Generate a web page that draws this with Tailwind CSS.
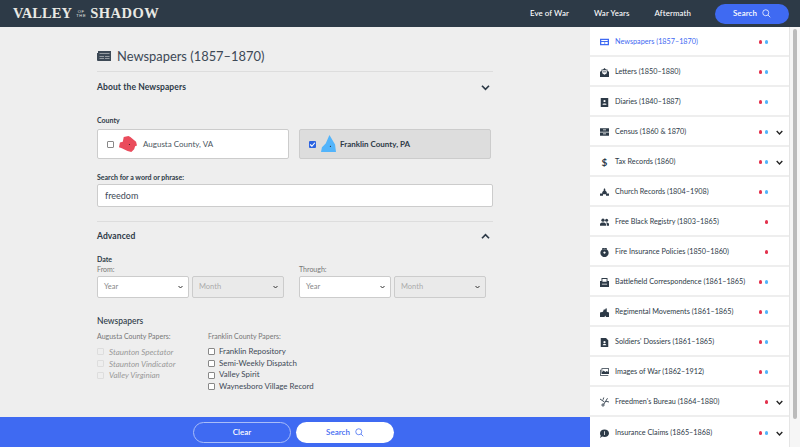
<!DOCTYPE html>
<html lang="en">
<head>
<meta charset="utf-8">
<script src="https://cdn.jsdelivr.net/npm/@tailwindcss/browser@4"></script>
<title>Valley of the Shadow</title>
</head>
<body class="h-[447px] w-[800px] overflow-hidden bg-[#eeeeee] font-['Lato',sans-serif] text-[#2d3a47]">
<header class="flex h-[27px] items-center justify-between bg-[#2d3a47] pl-[13px] pr-[11px] text-white">
  <div class="flex items-center font-['Liberation_Serif',serif] text-[14.5px] font-bold tracking-[0.1px] text-[#e9e9e4]">
    <span>VALLEY</span>
    <span class="mx-[4px] flex flex-col items-center font-['Liberation_Sans',sans-serif] text-[4px] font-normal leading-[4px] tracking-[0.7px]"><span>OF</span><span>THE</span></span>
    <span class="tracking-[0.5px]">SHADOW</span>
  </div>
  <nav class="flex items-center text-[7.9px] font-medium tracking-[0.1px]">
    <a class="mr-[25px]">Eve of War</a>
    <a class="mr-[25px]">War Years</a>
    <a class="mr-[24px]">Aftermath</a>
    <button class="flex h-[20px] w-[74px] items-center justify-center gap-[5px] rounded-full bg-[#3f6af2] font-semibold">Search
      <svg class="h-[9px] w-[9px]" viewBox="0 0 24 24" fill="none" stroke="currentColor" stroke-width="2"><circle cx="10" cy="10" r="8"/><path d="M16 16l6 6"/></svg>
    </button>
  </nav>
</header>
<div class="flex h-[420px]">
  <main class="flex h-full w-[590px] flex-col">
    <div class="h-[390px] px-[97px]">
      <div class="flex h-[45px] items-end gap-[6px] border-b border-[#dddddd] pb-[6px]">
        <svg class="mb-[4px] h-[10px] w-[14px] text-[#3d4956]" viewBox="0 0 14 10" fill="currentColor"><path fill-rule="evenodd" d="M0 2h1V0h13v10H1a1 1 0 0 1-1-1zM2.500 2.400v.6h10v-.6zM2.500 5v.6h4.600V5zM8 5v.6h4.500V5zM2.500 7.200v.6h4.600v-.6zM8 7.200v.6h4.500v-.6z"/></svg>
        <h1 class="text-[12.9px] font-normal leading-[18px] text-[#3d4956]">Newspapers (1857–1870)</h1>
      </div>
      <div class="flex h-[30px] items-center justify-between">
        <h2 class="text-[8.5px] font-bold tracking-[0.1px]">About the Newspapers</h2>
        <svg class="mr-[3px] h-[7px] w-[9px]" viewBox="0 0 10 8" fill="none" stroke="currentColor" stroke-width="2"><path d="M1 2l4 4 4-4"/></svg>
      </div>
      <p class="mt-[12px] mb-[3px] h-[12px] text-[7px] font-bold leading-[12px]">County</p>
      <div class="flex gap-[10px]">
        <label class="flex h-[30px] w-[192px] items-center rounded-[2px] border border-[#cccccc] bg-white pl-[9px] text-[8px] text-[#4a5560]">
          <span class="h-[7px] w-[7px] rounded-[1px] border border-[#888888] bg-white"></span>
          <svg class="ml-[5px] h-[18px] w-[18px]" viewBox="0 0 19 19"><path fill="#ea4c5c" d="M5 2l5-1 2 1 6 5 1 4-2 1-1 3-3 3-4-1-6-3-3-1 1-5 3-1z"/><circle cx="11" cy="10" r=".6" fill="#222"/></svg>
          <span class="ml-[6px]">Augusta County, VA</span>
        </label>
        <label class="flex h-[30px] w-[192px] items-center rounded-[2px] border border-[#cccccc] bg-[#dddddd] pl-[9px] text-[8px] font-bold">
          <span class="flex h-[7px] w-[7px] items-center justify-center rounded-[1px] bg-[#2b63e0]"><svg class="h-[7px] w-[7px]" viewBox="0 0 6 6" fill="none" stroke="white" stroke-width="1"><path d="M1 3l1.500 1.500L5 1.500"/></svg></span>
          <svg class="ml-[5px] h-[18px] w-[15px]" viewBox="0 0 16 19"><path fill="#52b4fb" d="M9 0l6 10 1 8-16 0 1-5 4-4z"/><circle cx="10" cy="12" r=".6" fill="#222"/></svg>
          <span class="ml-[4px]">Franklin County, PA</span>
        </label>
      </div>
      <label class="mt-[12px] block h-[12px] text-[7px] font-bold leading-[12px]">Search for a word or phrase:</label>
      <div class="mt-[1px] flex h-[23px] items-center rounded-[2px] border border-[#cccccc] bg-white px-[7px] text-[9px] text-[#3d4956]">freedom</div>
      <div class="mt-[14px] flex h-[30px] items-center justify-between border-t border-[#dddddd]">
        <h2 class="text-[8.5px] font-bold tracking-[0.1px]">Advanced</h2>
        <svg class="mr-[3px] h-[7px] w-[9px]" viewBox="0 0 10 8" fill="none" stroke="currentColor" stroke-width="2"><path d="M1 6l4-4 4 4"/></svg>
      </div>
      <p class="mt-[1px] h-[13px] text-[7px] font-bold leading-[14px]">Date</p>
      <div class="flex gap-[10px]">
        <div class="w-[192px]">
          <p class="h-[11px] text-[7px] leading-[8px] text-[#777777]">From:</p>
          <div class="flex gap-[3px]">
            <div class="flex h-[22px] w-[92px] items-center justify-between rounded-[2px] border border-[#cccccc] bg-white pl-[6px] pr-[5px] text-[7.5px] text-[#888888]">Year<svg class="h-[4px] w-[5px] text-[#333333]" viewBox="0 0 10 8" fill="none" stroke="currentColor" stroke-width="2"><path d="M1 2l4 4 4-4"/></svg></div>
            <div class="flex h-[22px] w-[92px] items-center justify-between rounded-[2px] border border-[#cccccc] bg-[#eaeaea] pl-[6px] pr-[5px] text-[7.5px] text-[#aaaaaa]">Month<svg class="h-[4px] w-[5px] text-[#333333]" viewBox="0 0 10 8" fill="none" stroke="currentColor" stroke-width="2"><path d="M1 2l4 4 4-4"/></svg></div>
          </div>
        </div>
        <div class="w-[192px]">
          <p class="h-[11px] text-[7px] leading-[8px] text-[#777777]">Through:</p>
          <div class="flex gap-[3px]">
            <div class="flex h-[22px] w-[92px] items-center justify-between rounded-[2px] border border-[#cccccc] bg-white pl-[6px] pr-[5px] text-[7.5px] text-[#888888]">Year<svg class="h-[4px] w-[5px] text-[#333333]" viewBox="0 0 10 8" fill="none" stroke="currentColor" stroke-width="2"><path d="M1 2l4 4 4-4"/></svg></div>
            <div class="flex h-[22px] w-[92px] items-center justify-between rounded-[2px] border border-[#cccccc] bg-[#eaeaea] pl-[6px] pr-[5px] text-[7.5px] text-[#aaaaaa]">Month<svg class="h-[4px] w-[5px] text-[#333333]" viewBox="0 0 10 8" fill="none" stroke="currentColor" stroke-width="2"><path d="M1 2l4 4 4-4"/></svg></div>
          </div>
        </div>
      </div>
      <h3 class="mt-[17px] h-[12px] text-[8.5px] font-medium leading-[12px]">Newspapers</h3>
      <div class="mt-[3px] flex">
        <div class="w-[111px]">
          <p class="mb-[4px] h-[12px] text-[7px] leading-[12px] text-[#777777]">Augusta County Papers:</p>
          <div class="flex h-[11.7px] items-center gap-[5px] text-[8px] italic text-[#999999]"><span class="h-[7px] w-[7px] rounded-[1px] border border-[#dddddd]"></span>Staunton Spectator</div>
          <div class="flex h-[11.7px] items-center gap-[5px] text-[8px] italic text-[#999999]"><span class="h-[7px] w-[7px] rounded-[1px] border border-[#dddddd]"></span>Staunton Vindicator</div>
          <div class="flex h-[11.7px] items-center gap-[5px] text-[8px] italic text-[#999999]"><span class="h-[7px] w-[7px] rounded-[1px] border border-[#dddddd]"></span>Valley Virginian</div>
        </div>
        <div>
          <p class="mb-[4px] h-[12px] text-[7px] leading-[12px] text-[#777777]">Franklin County Papers:</p>
          <div class="flex h-[11.7px] items-center gap-[4px] text-[7.9px] text-[#3d4956]"><span class="h-[7px] w-[7px] rounded-[1px] border border-[#888888] bg-white"></span>Franklin Repository</div>
          <div class="flex h-[11.7px] items-center gap-[4px] text-[7.9px] text-[#3d4956]"><span class="h-[7px] w-[7px] rounded-[1px] border border-[#888888] bg-white"></span>Semi-Weekly Dispatch</div>
          <div class="flex h-[11.7px] items-center gap-[4px] text-[7.9px] text-[#3d4956]"><span class="h-[7px] w-[7px] rounded-[1px] border border-[#888888] bg-white"></span>Valley Spirit</div>
          <div class="flex h-[11.7px] items-center gap-[4px] text-[7.9px] text-[#3d4956]"><span class="h-[7px] w-[7px] rounded-[1px] border border-[#888888] bg-white"></span>Waynesboro Village Record</div>
        </div>
      </div>
    </div>
    <div class="flex h-[30px] items-center justify-center gap-[5px] bg-[#3f6af2] pr-[3px] text-[8px] font-semibold">
      <button class="h-[21px] w-[98px] rounded-full border border-[#a9bdf8] text-white">Clear</button>
      <button class="flex h-[21px] w-[98px] items-center justify-center gap-[5px] rounded-full bg-white text-[#3f6af2]">Search
        <svg class="h-[9px] w-[9px]" viewBox="0 0 24 24" fill="none" stroke="currentColor" stroke-width="2"><circle cx="10" cy="10" r="8"/><path d="M16 16l6 6"/></svg>
      </button>
    </div>
  </main>
  <aside class="flex h-full w-[210px] bg-white">
    <ul class="w-[199px] text-[7.25px] text-[#2d3a47]">
      <li class="flex h-[30px] items-center border-b-2 border-[#eeeeee] pt-[2px] pl-[10px] text-[#3f6af2]">
        <svg class="h-[8px] w-[9px]" viewBox="0 0 14 12" fill="currentColor"><path fill-rule="evenodd" d="M0 1h14v10H0zM2 3v1.500h10V3zM2 6v3h5V6zM8 6v3h4V6z"/></svg>
        <span class="ml-[6px] flex-1">Newspapers (1857–1870)</span>
        <span class="mr-[2.500px] h-[3.500px] w-[3.500px] rounded-full bg-[#e3324d]"></span><span class="mr-[21px] h-[3.500px] w-[3.500px] rounded-full bg-[#52b4fb]"></span>
      </li>
      <li class="flex h-[30px] items-center border-b-2 border-[#eeeeee] pt-[2px] pl-[10px]">
        <svg class="h-[9px] w-[9px]" viewBox="0 0 12 12" fill="#2d3a47"><path fill-rule="evenodd" d="M0 5l2-1V2h2l2-2 2 2h2v2l2 1v7H0zM3 3v4l3 2 3-2V3zM4 4.500h4v1H4z"/></svg>
        <span class="ml-[6px] flex-1">Letters (1850–1880)</span>
        <span class="mr-[2.500px] h-[3.500px] w-[3.500px] rounded-full bg-[#e3324d]"></span><span class="mr-[21px] h-[3.500px] w-[3.500px] rounded-full bg-[#52b4fb]"></span>
      </li>
      <li class="flex h-[30px] items-center border-b-2 border-[#eeeeee] pt-[2px] pl-[10px]">
        <svg class="h-[9px] w-[9px]" viewBox="0 0 12 12" fill="#2d3a47"><path fill-rule="evenodd" d="M1 0h10v12H1zM6 2.500a1.500 1.500 0 1 0 .01 0zM3.500 8v1h5V8c0-1-5-1-5 0z"/></svg>
        <span class="ml-[6px] flex-1">Diaries (1840–1887)</span>
        <span class="mr-[2.500px] h-[3.500px] w-[3.500px] rounded-full bg-[#e3324d]"></span><span class="mr-[21px] h-[3.500px] w-[3.500px] rounded-full bg-[#52b4fb]"></span>
      </li>
      <li class="flex h-[30px] items-center border-b-2 border-[#eeeeee] pt-[2px] pl-[10px]">
        <svg class="h-[8px] w-[9px]" viewBox="0 0 12 10" fill="#2d3a47"><path fill-rule="evenodd" d="M0 0h12v4.500H0zM0 5.500h12V10H0zM4 1.500v1h4v-1zM4 7v1h4V7z"/></svg>
        <span class="ml-[6px] flex-1">Census (1860 &amp; 1870)</span>
        <span class="mr-[2.500px] h-[3.500px] w-[3.500px] rounded-full bg-[#e3324d]"></span><span class="mr-[8px] h-[3.500px] w-[3.500px] rounded-full bg-[#52b4fb]"></span>
        <svg class="mr-[6px] h-[7px] w-[7px] text-[#222222]" viewBox="0 0 10 8" fill="none" stroke="currentColor" stroke-width="2"><path d="M1 2l4 4 4-4"/></svg>
      </li>
      <li class="flex h-[30px] items-center border-b-2 border-[#eeeeee] pt-[2px] pl-[10px]">
        <span class="flex h-[9px] w-[9px] items-center justify-center text-[10px] font-bold text-[#2d3a47]">$</span>
        <span class="ml-[6px] flex-1">Tax Records (1860)</span>
        <span class="mr-[2.500px] h-[3.500px] w-[3.500px] rounded-full bg-[#e3324d]"></span><span class="mr-[8px] h-[3.500px] w-[3.500px] rounded-full bg-[#52b4fb]"></span>
        <svg class="mr-[6px] h-[7px] w-[7px] text-[#222222]" viewBox="0 0 10 8" fill="none" stroke="currentColor" stroke-width="2"><path d="M1 2l4 4 4-4"/></svg>
      </li>
      <li class="flex h-[30px] items-center border-b-2 border-[#eeeeee] pt-[2px] pl-[10px]">
        <svg class="h-[8px] w-[9px]" viewBox="0 0 12 10" fill="#2d3a47"><path d="M6 0l1 1v2l2 2v2h3v3H8V8H4v2H0V7h3V5l2-2V1z"/></svg>
        <span class="ml-[6px] flex-1">Church Records (1804–1908)</span>
        <span class="mr-[2.500px] h-[3.500px] w-[3.500px] rounded-full bg-[#e3324d]"></span><span class="mr-[21px] h-[3.500px] w-[3.500px] rounded-full bg-[#52b4fb]"></span>
      </li>
      <li class="flex h-[30px] items-center border-b-2 border-[#eeeeee] pt-[2px] pl-[10px]">
        <svg class="h-[8px] w-[9px]" viewBox="0 0 12 10" fill="#2d3a47"><circle cx="4" cy="2.500" r="2.200"/><circle cx="8.800" cy="2.500" r="2"/><path d="M0 10V8c0-3 8-3 8 0v2zM9 10V8c0-1-.5-1.700-1-2.300 2-.5 4 .5 4 2.300v2z"/></svg>
        <span class="ml-[6px] flex-1">Free Black Registry (1803–1865)</span>
        <span class="mr-[21px] h-[3.500px] w-[3.500px] rounded-full bg-[#e3324d]"></span>
      </li>
      <li class="flex h-[30px] items-center border-b-2 border-[#eeeeee] pt-[2px] pl-[10px]">
        <svg class="h-[9px] w-[9px]" viewBox="0 0 12 12" fill="#2d3a47"><path fill-rule="evenodd" d="M6 1a5.500 5.500 0 1 0 .01 0zM6 4.500a1.500 1.500 0 1 1-.01 0zM3 0h6v1.500H3z"/></svg>
        <span class="ml-[6px] flex-1">Fire Insurance Policies (1850–1860)</span>
        <span class="mr-[21px] h-[3.500px] w-[3.500px] rounded-full bg-[#e3324d]"></span>
      </li>
      <li class="flex h-[30px] items-center border-b-2 border-[#eeeeee] pt-[2px] pl-[10px]">
        <svg class="h-[9px] w-[9px]" viewBox="0 0 12 12" fill="#2d3a47"><path fill-rule="evenodd" d="M2 0h8v4h2v8H0V4h2zM3.200 1.200V5h5.600V1.200zM2.500 7.500v1h7v-1z"/></svg>
        <span class="ml-[6px] flex-1">Battlefield Correspondence (1861–1865)</span>
        <span class="mr-[2.500px] h-[3.500px] w-[3.500px] rounded-full bg-[#e3324d]"></span><span class="mr-[21px] h-[3.500px] w-[3.500px] rounded-full bg-[#52b4fb]"></span>
      </li>
      <li class="flex h-[30px] items-center border-b-2 border-[#eeeeee] pt-[2px] pl-[10px]">
        <svg class="h-[9px] w-[9px]" viewBox="0 0 12 12" fill="#2d3a47"><path d="M0 6l4-1 1-3 2 0 1-2 1 1v4l3 1v6H8l-1-2-1 2H0z"/></svg>
        <span class="ml-[6px] flex-1">Regimental Movements (1861–1865)</span>
        <span class="mr-[2.500px] h-[3.500px] w-[3.500px] rounded-full bg-[#e3324d]"></span><span class="mr-[21px] h-[3.500px] w-[3.500px] rounded-full bg-[#52b4fb]"></span>
      </li>
      <li class="flex h-[30px] items-center border-b-2 border-[#eeeeee] pt-[2px] pl-[10px]">
        <svg class="h-[9px] w-[9px]" viewBox="0 0 12 12" fill="#2d3a47"><path fill-rule="evenodd" d="M1 0h7l3 3v9H1zM6 4a1.500 1.500 0 1 0 .01 0zM3.500 9.500h5C8.500 7.500 3.500 7.500 3.500 9.500z"/></svg>
        <span class="ml-[6px] flex-1">Soldiers' Dossiers (1861–1865)</span>
        <span class="mr-[2.500px] h-[3.500px] w-[3.500px] rounded-full bg-[#e3324d]"></span><span class="mr-[21px] h-[3.500px] w-[3.500px] rounded-full bg-[#52b4fb]"></span>
      </li>
      <li class="flex h-[30px] items-center border-b-2 border-[#eeeeee] pt-[2px] pl-[10px]">
        <svg class="h-[8px] w-[9px]" viewBox="0 0 12 10" fill="#2d3a47"><path fill-rule="evenodd" d="M2 0h10v7.500H2zM3 1v4l2-2 2 2 2-1.500L11 5V1zM0 2h1v7h10v1H0z"/></svg>
        <span class="ml-[6px] flex-1">Images of War (1862–1912)</span>
        <span class="mr-[2.500px] h-[3.500px] w-[3.500px] rounded-full bg-[#e3324d]"></span><span class="mr-[21px] h-[3.500px] w-[3.500px] rounded-full bg-[#52b4fb]"></span>
      </li>
      <li class="flex h-[30px] items-center border-b-2 border-[#eeeeee] pt-[2px] pl-[10px]">
        <svg class="h-[10px] w-[9px]" viewBox="0 0 12 12" fill="none" stroke="#2d3a47" stroke-width="1.200"><circle cx="4" cy="10" r="1.500"/><path d="M5 9l5-8M0 2l6 4M4 3l1-3M8 5l4 1"/></svg>
        <span class="ml-[6px] flex-1">Freedmen's Bureau (1864–1880)</span>
        <span class="mr-[8px] h-[3.500px] w-[3.500px] rounded-full bg-[#e3324d]"></span>
        <svg class="mr-[6px] h-[7px] w-[7px] text-[#222222]" viewBox="0 0 10 8" fill="none" stroke="currentColor" stroke-width="2"><path d="M1 2l4 4 4-4"/></svg>
      </li>
      <li class="flex h-[30px] items-center pt-[2px] pl-[10px]">
        <svg class="h-[9px] w-[9px]" viewBox="0 0 12 12" fill="#2d3a47"><path fill-rule="evenodd" d="M6 .500c3.500 0 6 2.300 6 5s-2.500 5-6 5c-1 0-2-.2-3-.6L0 12l1-3C.300 8 0 6.800 0 5.500 0 2.800 2.500.500 6 .500zM5.500 3v5h1V3z"/></svg>
        <span class="ml-[6px] flex-1">Insurance Claims (1865–1868)</span>
        <span class="mr-[2.500px] h-[3.500px] w-[3.500px] rounded-full bg-[#e3324d]"></span><span class="mr-[8px] h-[3.500px] w-[3.500px] rounded-full bg-[#52b4fb]"></span>
        <svg class="mr-[6px] h-[7px] w-[7px] text-[#222222]" viewBox="0 0 10 8" fill="none" stroke="currentColor" stroke-width="2"><path d="M1 2l4 4 4-4"/></svg>
      </li>
    </ul>
    <div class="flex w-[11px] justify-center border-l border-[#e5e5e5] bg-[#f6f6f6] pt-[2px]">
      <div class="h-[390px] w-[4px] rounded-full bg-[#bbbbbb]"></div>
    </div>
  </aside>
</div>
</body>
</html>
